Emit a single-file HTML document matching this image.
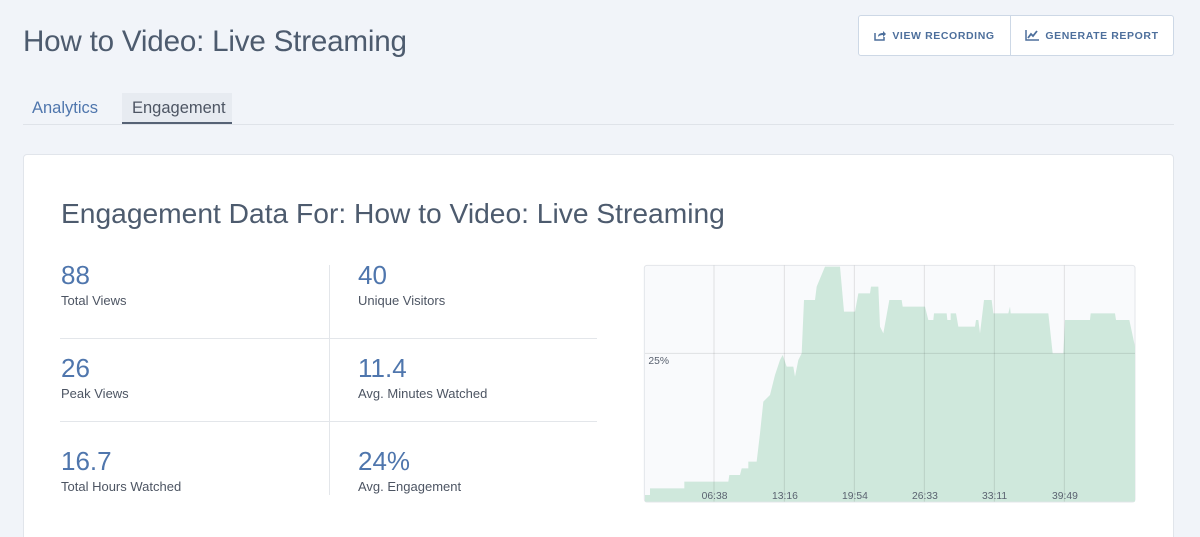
<!DOCTYPE html>
<html><head><style>
*{margin:0;padding:0;box-sizing:border-box}
html,body{width:1200px;height:537px;overflow:hidden}
body{background:#f1f4f9;font-family:"Liberation Sans",sans-serif;position:relative;color:#4a5568}
.a{position:absolute;white-space:nowrap}
h1{position:absolute;left:23px;top:25px;font-size:29.6px;font-weight:normal;color:#4d5b6e;letter-spacing:-0.2px}
.btns{position:absolute;left:858px;top:15px;width:316px;height:41px;border:1px solid #cdd8e6;border-radius:3px;background:#fff;display:flex}
.btn{display:flex;align-items:center;justify-content:center;font-size:10.5px;font-weight:bold;letter-spacing:0.6px;color:#4d6f9c;gap:6px}
.stat .n{font-size:26px;color:#4f76ad}
.stat .l{font-size:13px;color:#4d5563;margin-top:2px}
.stat{position:absolute}
</style></head><body>
<h1>How to Video: Live Streaming</h1>
<div class="btns">
<div class="btn" style="width:152px;border-right:1px solid #cdd8e6"><svg width="12" height="11" viewBox="0 0 12 11"><path d="M1 3v7h9V7" fill="none" stroke="#4d6f9c" stroke-width="1.5"/><path d="M4 7c0-3 2-4 5-4V1l3 3-3 3V5C7 5 5 5.5 4 7z" fill="#4d6f9c"/></svg>VIEW RECORDING</div>
<div class="btn" style="flex:1"><svg width="14" height="11" viewBox="0 0 14 11"><path d="M1 0v10h13" fill="none" stroke="#4d6f9c" stroke-width="1.5"/><path d="M3 8l3-4 2 2 4-5" fill="none" stroke="#4d6f9c" stroke-width="1.8"/></svg>GENERATE REPORT</div>
</div>
<div class="a" style="left:32px;top:99px;font-size:16.5px;color:#4f76ad">Analytics</div>
<div class="a" style="left:122px;top:93px;width:110px;height:31px;background:#e7ebf1;border-bottom:2px solid #566275"></div>
<div class="a" style="left:132px;top:99px;font-size:16.5px;color:#4d5563">Engagement</div>
<div class="a" style="left:23px;top:124px;width:1151px;height:1px;background:#dfe3e9"></div>
<div class="a" style="left:23px;top:154px;width:1151px;height:400px;background:#fff;border:1px solid #e1e5eb;border-radius:4px"></div>
<div class="a" style="left:61px;top:197px;font-size:28.2px;color:#4d5b6e">Engagement Data For: How to Video: Live Streaming</div>
<div class="a" style="left:60px;top:338px;width:537px;height:1px;background:#e3e6ea"></div>
<div class="a" style="left:60px;top:421px;width:537px;height:1px;background:#e3e6ea"></div>
<div class="a" style="left:329px;top:265px;width:1px;height:230px;background:#e3e6ea"></div>
<div class="stat" style="left:61px;top:260px"><div class="n">88</div><div class="l">Total Views</div></div>
<div class="stat" style="left:358px;top:260px"><div class="n">40</div><div class="l">Unique Visitors</div></div>
<div class="stat" style="left:61px;top:353px"><div class="n">26</div><div class="l">Peak Views</div></div>
<div class="stat" style="left:358px;top:353px"><div class="n">11.4</div><div class="l">Avg. Minutes Watched</div></div>
<div class="stat" style="left:61px;top:446px"><div class="n">16.7</div><div class="l">Total Hours Watched</div></div>
<div class="stat" style="left:358px;top:446px"><div class="n">24%</div><div class="l">Avg. Engagement</div></div>
<svg class="a" style="left:640px;top:260px" width="500" height="250" viewBox="0 0 1500 750">
<rect x="13" y="16" width="1472" height="710" rx="8" fill="#f9fafc" stroke="#e3e6ea" stroke-width="3"/>
<polygon fill="#cfe8dc" points="15,705 30,705 30,685 100,685 133,685 133,665 265,665 268,645 300,645 305,625 325,625 325,605 350,605 360,520 370,425 390,405 405,345 420,300 428,285 440,320 460,320 465,350 475,300 485,280 492,120 525,120 530,80 555,20 600,20 612,155 645,155 655,100 690,100 693,80 715,80 720,200 730,220 748,120 785,120 788,140 855,140 865,180 880,180 882,160 920,160 922,180 932,180 932,160 948,160 955,200 1005,200 1008,180 1015,180 1020,220 1032,120 1055,120 1060,160 1105,160 1110,140 1112,160 1225,160 1238,280 1270,280 1275,180 1350,180 1352,160 1425,160 1428,180 1468,180 1485,260 1485,725 15,725"/>
<g stroke="#000" stroke-opacity="0.1" stroke-width="3">
<line x1="222" y1="16" x2="222" y2="725"/><line x1="433" y1="16" x2="433" y2="725"/><line x1="643" y1="16" x2="643" y2="725"/><line x1="853" y1="16" x2="853" y2="725"/><line x1="1063" y1="16" x2="1063" y2="725"/><line x1="1273" y1="16" x2="1273" y2="725"/><line x1="15" y1="280" x2="1485" y2="280"/>
</g>
<g font-family="Liberation Sans,sans-serif" font-size="31" fill="#5a6270">
<text x="25" y="312">25%</text>
<text x="185" y="717">06:38</text><text x="396" y="717">13:16</text><text x="606" y="717">19:54</text><text x="816" y="717">26:33</text><text x="1026" y="717">33:11</text><text x="1236" y="717">39:49</text>
</g>
</svg>
</body></html>
